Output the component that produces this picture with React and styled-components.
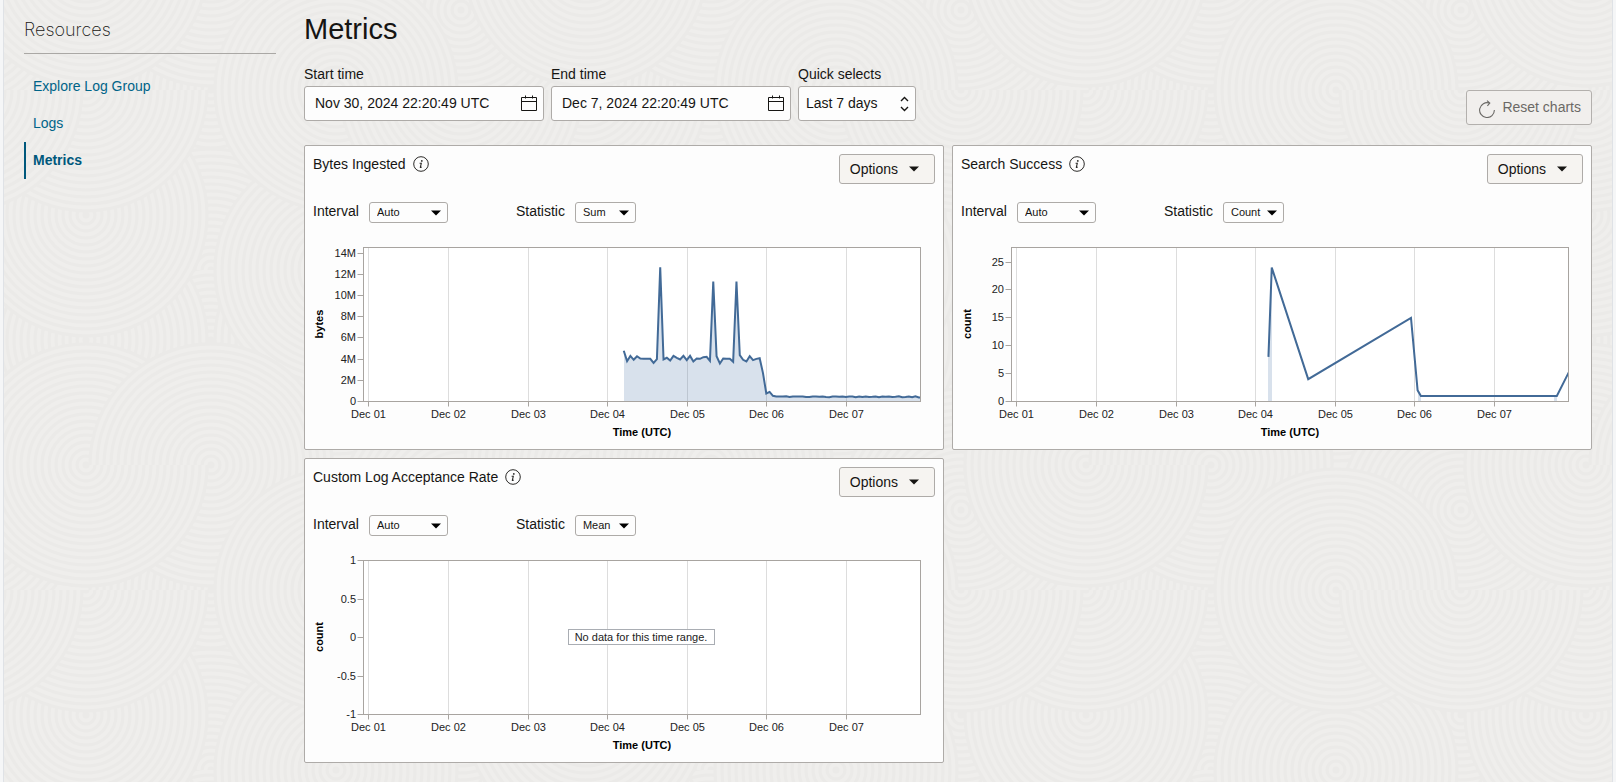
import React from "react";
import styled, { createGlobalStyle } from "styled-components";

// ---------- background texture ----------

const TILE = 500;
const BASE = "#efeeec";
const GROOVE = "#ebeae8";

// [cx, cy, which half: full | top | bottom], painted in this order
const swirls = [
  [207, 90, "full"],
  [207, 340, "full"],
  [457, 340, "full"],
  [457, 215, "full"],
  [332, 340, "full"],
  [82, 340, "full"],
  [207, 270, "top"],
  [332, 270, "full"],
  [82, 215, "full"],
  [82, 90, "bottom"],
  [457, 10, "full"],
  [207, 465, "full"],
  [332, 90, "full"],
  [457, 90, "bottom"],
  [82, 465, "full"],
  [207, 465, "top"],
  [82, 465, "bottom"],
];

const swirlRings = ([cx, cy, part]) => {
  let rings = "";
  for (let r = 121; r > 0; r -= 7) {
    const fill = r === 121 ? BASE : "none";
    if (part === "full") {
      rings += `<circle cx="${cx}" cy="${cy}" r="${r}" fill="${fill}"/>`;
    } else {
      const sweep = part === "top" ? 1 : 0;
      rings += `<path d="M${cx - r} ${cy}A${r} ${r} 0 0 ${sweep} ${cx + r} ${cy}" fill="${fill}"/>`;
    }
  }
  return rings;
};

const makeTexture = () => {
  let body = "";
  swirls.forEach((swirl) => {
    const rings = swirlRings(swirl);
    [-TILE, 0, TILE].forEach((dx) => {
      [-TILE, 0, TILE].forEach((dy) => {
        body += `<g transform="translate(${dx} ${dy})">${rings}</g>`;
      });
    });
  });
  const svg = `<svg xmlns="http://www.w3.org/2000/svg" width="${TILE}" height="${TILE}"><rect width="${TILE}" height="${TILE}" fill="${BASE}"/><g stroke="${GROOVE}" stroke-width="3">${body}</g></svg>`;
  return `data:image/svg+xml,${encodeURIComponent(svg)}`;
};

const texture = makeTexture();

const svgUrl = (w, h, inner) =>
  `data:image/svg+xml,${encodeURIComponent(
    `<svg xmlns="http://www.w3.org/2000/svg" width="${w}" height="${h}">${inner}</svg>`
  )}`;

const caretUrl = svgUrl(10, 6, '<path d="M0 0.5h10L5 5.5z" fill="#000"/>');
const sorterUrl = svgUrl(
  9,
  16,
  '<path d="M1 5l3.5-3.5L8 5M1 11l3.5 3.5L8 11" fill="none" stroke="#161513" stroke-width="1.4"/>'
);

// ---------- chart data ----------

const days = ["Dec 01", "Dec 02", "Dec 03", "Dec 04", "Dec 05", "Dec 06", "Dec 07"];

const byteValues = [
  4.79, 3.81, 4.31, 3.94, 4.28, 4.06, 4.03, 4.03, 4.03, 3.65, 4.0, 12.69, 3.97, 4.13, 3.87, 4.31,
  4.13, 3.97, 4.31, 3.91, 4.31, 3.78, 4.06, 4.03, 4.19, 4.22, 3.84, 11.34, 4.28, 3.59, 4.06, 4.03,
  4.03, 3.75, 11.34, 4.38, 3.94, 3.78, 4.28, 3.91, 4.03, 4.09, 2.68, 0.76, 0.91, 0.54, 0.48, 0.48,
  0.48, 0.5, 0.42, 0.48, 0.47, 0.48, 0.48, 0.42, 0.42, 0.47, 0.48, 0.44, 0.48, 0.42, 0.4, 0.47,
  0.48, 0.44, 0.48, 0.42, 0.47, 0.48, 0.4, 0.48, 0.42, 0.47, 0.42, 0.44, 0.48, 0.4, 0.47, 0.44,
  0.48, 0.42, 0.44, 0.5, 0.4, 0.42, 0.48, 0.4, 0.5, 0.38, 0.38,
];
const bytePoints = byteValues.map((value, i) => [77 + i, value]);

const successPoints = [
  [76, 8],
  [77, 24],
  [88, 4],
  [119, 15],
  [121, 2],
  [122, 1],
  [162, 1],
  [163, 1],
  [167, 5.7],
];

const charts = [
  {
    id: "bytes",
    title: "Bytes Ingested",
    statistic: "Sum",
    unit: "bytes",
    min: 0,
    max: 14.55,
    ticks: [0, 2, 4, 6, 8, 10, 12, 14],
    format: (tick) => (tick === 0 ? "0" : `${tick}M`),
    points: bytePoints,
  },
  {
    id: "success",
    title: "Search Success",
    statistic: "Count",
    unit: "count",
    min: 0,
    max: 27.6,
    ticks: [0, 5, 10, 15, 20, 25],
    format: (tick) => tick,
    points: successPoints,
  },
  {
    id: "acceptance",
    title: "Custom Log Acceptance Rate",
    statistic: "Mean",
    unit: "count",
    min: -1,
    max: 1,
    ticks: [-1, -0.5, 0, 0.5, 1],
    format: (tick) => tick,
    points: [],
  },
];

// ---------- icons ----------

const CalendarIcon = () => (
  <svg width="16" height="16" viewBox="0 0 16 16" fill="none" stroke="#161513" aria-hidden="true">
    <path d="M0.5 2.5h15v13h-15zM0.5 6.5h15M4.5 0.5v3M11.5 0.5v3" />
  </svg>
);

const ResetIcon = () => (
  <svg width="16" height="22" viewBox="0 0 16 22" fill="none" stroke="#6b6966" strokeWidth="1.1" aria-hidden="true">
    <path d="M15.4 14A7.4 7.4 0 1 1 10.4 7.1M8 4.6L10.8 7.1L8.4 9.8" />
  </svg>
);

const InfoIcon = () => (
  <svg width="16" height="16" viewBox="0 0 16 16" aria-hidden="true">
    <circle cx="8" cy="8" r="7.3" fill="none" stroke="#2b2a28" />
    <circle cx="8.8" cy="4.9" r="0.9" fill="#2b2a28" />
    <path d="M6.6 7.3h1.7L7.3 11.3q0 0.6 1.4-0.4" fill="none" stroke="#2b2a28" strokeWidth="1.1" />
  </svg>
);

const CaretIcon = () => (
  <svg width="10" height="6" viewBox="0 0 10 6" aria-hidden="true">
    <path d="M0 0.5h10L5 5.5z" fill="#161513" />
  </svg>
);

// ---------- chart ----------

const plot = { left: 50.5, right: 607.5, top: 7.5, bottom: 161.5, day1: 55.5 };
const hourWidth = 3.315;

function Chart({ chart }) {
  const xAt = (hour) => plot.day1 + hour * hourWidth;
  const yAt = (value) =>
    plot.bottom - ((value - chart.min) / (chart.max - chart.min)) * (plot.bottom - plot.top);
  const line = chart.points.map(([h, v], i) => `${i ? "L" : "M"}${xAt(h)} ${yAt(v)}`).join("");

  // only neighbouring hours get a shaded area, gaps stay clear
  let area = "";
  chart.points.forEach(([h, v], i) => {
    const next = chart.points[i + 1];
    if (next && next[0] - h === 1) {
      area += `M${xAt(h)} ${plot.bottom}V${yAt(v)}L${xAt(next[0])} ${yAt(next[1])}V${plot.bottom}z`;
    }
  });

  return (
    <ChartSvg viewBox="0 0 622 201" role="img" aria-label={chart.title}>
      <clipPath id={`clip-${chart.id}`}>
        <rect x={plot.left} y={plot.top} width={plot.right - plot.left} height={plot.bottom - plot.top} />
      </clipPath>
      <rect
        x={plot.left}
        y={plot.top}
        width={plot.right - plot.left}
        height={plot.bottom - plot.top}
        fill="#ffffff"
      />
      {days.map((day, i) => {
        const x = Math.round(xAt(i * 24) - 0.1) + 0.5;
        return (
          <g key={day}>
            <path d={`M${x} ${plot.top}V${plot.bottom}`} stroke="#dddddd" />
            <path d={`M${x} ${plot.bottom}v5`} stroke="#a8a4a0" />
            <AxisText x={x} y="178" textAnchor="middle">
              {day}
            </AxisText>
          </g>
        );
      })}
      {chart.ticks.map((tick) => {
        const y = Math.floor(yAt(tick)) + 0.5;
        return (
          <g key={tick}>
            <path d={`M${plot.left} ${y}h-6`} stroke="#a8a4a0" />
            <AxisText x="43" y={y + 3.5} textAnchor="end">
              {chart.format(tick)}
            </AxisText>
          </g>
        );
      })}
      <g clipPath={`url(#clip-${chart.id})`}>
        <path d={area} fill="#4c78a8" fillOpacity="0.22" shapeRendering="crispEdges" />
        <path d={line} fill="none" stroke="#426a97" strokeWidth="2" />
      </g>
      <rect
        x={plot.left}
        y={plot.top}
        width={plot.right - plot.left}
        height={plot.bottom - plot.top}
        fill="none"
        stroke="#a8a4a0"
      />
      <AxisTitle x="329" y="196" textAnchor="middle">
        Time (UTC)
      </AxisTitle>
      <AxisTitle transform="translate(10 84) rotate(-90)" textAnchor="middle">
        {chart.unit}
      </AxisTitle>
      {chart.points.length === 0 && (
        <g>
          <rect x="255.5" y="76.5" width="146" height="15" fill="#ffffff" stroke="#a9adb3" />
          <AxisText x="328" y="88" textAnchor="middle">
            No data for this time range.
          </AxisText>
        </g>
      )}
    </ChartSvg>
  );
}

function MetricCard({ chart }) {
  return (
    <Card>
      <CardHeader>
        <CardTitle>
          {chart.title}
          <InfoIcon />
        </CardTitle>
        <OptionsButton type="button">
          Options
          <CaretIcon />
        </OptionsButton>
      </CardHeader>
      <Controls>
        <Control>
          <ControlLabel htmlFor={`${chart.id}-interval`}>Interval</ControlLabel>
          <SmallSelect id={`${chart.id}-interval`} width="79px" defaultValue="Auto">
            <option>Auto</option>
          </SmallSelect>
        </Control>
        <Control>
          <ControlLabel htmlFor={`${chart.id}-statistic`}>Statistic</ControlLabel>
          <SmallSelect id={`${chart.id}-statistic`} width="61px" defaultValue={chart.statistic}>
            <option>{chart.statistic}</option>
          </SmallSelect>
        </Control>
      </Controls>
      <Chart chart={chart} />
    </Card>
  );
}

function DateField({ id, label, value }) {
  return (
    <Field>
      <label htmlFor={id}>{label}</label>
      <DateBox>
        <DateInput id={id} type="text" defaultValue={value} />
        <IconButton type="button" aria-label={`${label} calendar`}>
          <CalendarIcon />
        </IconButton>
      </DateBox>
    </Field>
  );
}

function App() {
  return (
    <>
      <GlobalStyle />
      <Page>
        <Sidebar>
          <SidebarTitle>Resources</SidebarTitle>
          <NavList>
            <li>
              <NavItem href="#explore">Explore Log Group</NavItem>
            </li>
            <li>
              <NavItem href="#logs">Logs</NavItem>
            </li>
            <li>
              <NavItem href="#metrics" $active>
                Metrics
              </NavItem>
            </li>
          </NavList>
        </Sidebar>
        <Main>
          <PageTitle>Metrics</PageTitle>
          <Toolbar>
            <Fields>
              <DateField id="start-time" label="Start time" value="Nov 30, 2024 22:20:49 UTC" />
              <DateField id="end-time" label="End time" value="Dec 7, 2024 22:20:49 UTC" />
              <Field>
                <label htmlFor="quick-selects">Quick selects</label>
                <QuickSelect id="quick-selects" defaultValue="Last 7 days">
                  <option>Last 7 days</option>
                </QuickSelect>
              </Field>
            </Fields>
            <ResetButton type="button">
              <ResetIcon />
              Reset charts
            </ResetButton>
          </Toolbar>
          <CardGrid>
            {charts.map((chart) => (
              <MetricCard key={chart.id} chart={chart} />
            ))}
          </CardGrid>
        </Main>
      </Page>
    </>
  );
}

const GlobalStyle = createGlobalStyle`
  * {
    box-sizing: border-box;
  }
  body {
    margin: 0;
    background-color: #f5f6f7;
    color: #161513;
    font-family: "Liberation Sans", Arial, sans-serif;
    font-size: 14px;
    line-height: 16px;
  }
  button, input, select {
    font-family: inherit;
    color: inherit;
  }
`;

const Page = styled.div`
  display: flex;
  gap: 28px;
  min-height: 100vh;
  margin: 0 3px;
  padding: 12px 20px 19px;
  border-left: 1px solid #dfe2e6;
  border-right: 1px solid #dfe2e6;
  background-image: url("${texture}");
`;

const Sidebar = styled.aside`
  flex: 0 0 252px;
`;
const SidebarTitle = styled.h2`
  margin: 0;
  padding: 5px 0 10px;
  border-bottom: 1px solid #aaa8a5;
  font-family: Inter, "Liberation Sans", sans-serif;
  font-size: 18px;
  font-weight: 200;
  line-height: 26px;
`;
const NavList = styled.ul`
  margin: 14px 0 0;
  padding: 0;
  list-style: none;
`;
const NavItem = styled.a`
  display: flex;
  align-items: center;
  height: 37px;
  padding: 0 0 1px 7px;
  border-left: 2px solid ${({ $active }) => ($active ? "#00587c" : "transparent")};
  color: ${({ $active }) => ($active ? "#00587c" : "#006488")};
  font-weight: ${({ $active }) => ($active ? "bold" : "normal")};
  text-decoration: none;
`;

const Main = styled.main`
  flex: 1;
  min-width: 0;
`;
const PageTitle = styled.h1`
  margin: 0 0 20px;
  font-size: 29px;
  font-weight: normal;
  line-height: 34px;
`;

const Toolbar = styled.div`
  display: flex;
  justify-content: space-between;
  align-items: flex-end;
  margin-bottom: 20px;
`;
const Fields = styled.div`
  display: flex;
  gap: 7px;
  padding-bottom: 4px;
`;
const Field = styled.div`
  display: flex;
  flex-direction: column;
  gap: 4px;
`;
const DateBox = styled.div`
  display: flex;
  align-items: center;
  width: 240px;
  height: 35px;
  padding: 0 6px 2px 10px;
  border: 1px solid #aeaba8;
  border-radius: 3px;
  background-color: #fdfdfd;
`;
const DateInput = styled.input`
  flex: 1;
  min-width: 0;
  padding: 0;
  border: 0;
  outline: 0;
  background: none;
  font-size: 14px;
`;
const IconButton = styled.button`
  display: flex;
  padding: 0;
  border: 0;
  background: none;
`;
const QuickSelect = styled.select`
  width: 118px;
  height: 35px;
  padding: 0 24px 2px 7px;
  border: 1px solid #aeaba8;
  border-radius: 3px;
  appearance: none;
  background: #fdfdfd url("${sorterUrl}") no-repeat right 6px center;
  font-size: 14px;
`;
const ResetButton = styled.button`
  display: flex;
  align-items: center;
  gap: 7px;
  height: 35px;
  padding: 0 10px 2px 12px;
  border: 1px solid #b3b0ad;
  border-radius: 3px;
  background-color: #f1efed;
  color: #6b6966;
  font-size: 14px;
`;

const CardGrid = styled.div`
  display: grid;
  grid-template-columns: 1fr 1fr;
  gap: 8px;
`;
const Card = styled.section`
  padding: 8px;
  border: 1px solid #aeaba8;
  border-radius: 2px;
  background-color: #fdfdfd;
`;
const CardHeader = styled.div`
  display: flex;
  justify-content: space-between;
`;
const CardTitle = styled.h3`
  display: flex;
  align-items: center;
  gap: 7px;
  height: 20px;
  margin: 0;
  font-size: 14px;
  font-weight: normal;
`;
const OptionsButton = styled.button`
  display: flex;
  align-items: center;
  gap: 11px;
  height: 30px;
  padding: 0 15px 0 10px;
  border: 1px solid #aeaba8;
  border-radius: 3px;
  background-color: #f6f4f1;
  font-size: 14px;
`;

const Controls = styled.div`
  display: flex;
  gap: 68px;
  margin: 18px 0 17px;
`;
const Control = styled.div`
  display: flex;
  gap: 10px;
`;
const ControlLabel = styled.label`
  line-height: 19px;
`;
const SmallSelect = styled.select`
  width: ${({ width }) => width};
  height: 21px;
  padding: 0 7px 1px;
  border: 1px solid #aeaba8;
  border-radius: 3px;
  appearance: none;
  background: #fdfdfd url("${caretUrl}") no-repeat right 6px center;
  font-size: 11px;
`;

const ChartSvg = styled.svg`
  display: block;
  width: 100%;
`;
const AxisText = styled.text`
  fill: #222222;
  font-size: 11px;
`;
const AxisTitle = styled(AxisText)`
  fill: #000000;
  font-weight: bold;
`;

export default App;
